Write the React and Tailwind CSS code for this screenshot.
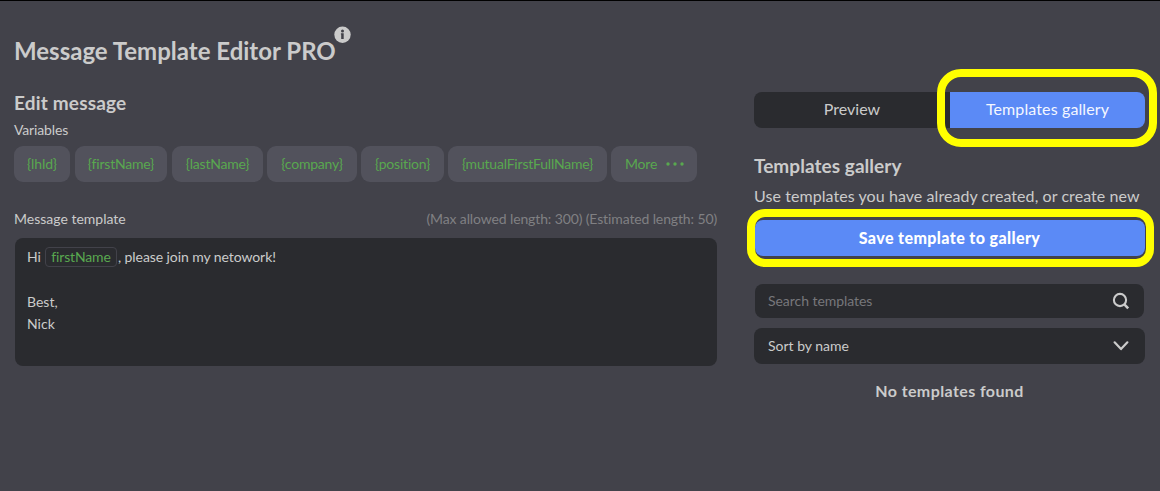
const variables = [
  { label: "{lhId}", box: "w-[56px] mr-[5px]" },
  { label: "{firstName}", box: "w-[92px] mr-[5px]" },
  { label: "{lastName}", box: "w-[91px] mr-1" },
  { label: "{company}", box: "w-[90px] mr-1" },
  { label: "{position}", box: "w-[83px] mr-1" },
  { label: "{mutualFirstFullName}", box: "w-[159px] mr-1" },
];

function InfoIcon() {
  return (
    <svg className="mt-[25px] -ml-[2px] size-[17px] shrink-0" viewBox="0 0 17 17">
      <circle cx="8.5" cy="8.8" r="8.2" fill="#cbcbcb" />
      <circle cx="8.5" cy="4.9" r="1.5" fill="#42424a" />
      <path d="M6.9 7.3h2.8v5.6H7.2V8.6h-.3z" fill="#42424a" />
    </svg>
  );
}

function EditorPanel() {
  return (
    <section className="w-[703px]">
      <h2 className="h-[26px] text-[19px] leading-[26px] font-bold tracking-[0.17px] whitespace-nowrap">Edit message</h2>
      <div className="mt-[4px] h-5 text-[14px] leading-5 tracking-[-0.15px]">Variables</div>
      <div className="mt-[6px] flex text-[14px] tracking-[-0.2px] text-[#59a84f]">
        {variables.map((v) => (
          <button key={v.label} className={`${v.box} h-9 shrink-0 rounded-[9px] bg-[#52525c] pb-[2px] whitespace-nowrap`}>
            {v.label}
          </button>
        ))}
        <button className="flex h-9 w-[86px] items-center rounded-[9px] bg-[#52525c] pb-[2px] pl-[14px]">
          More
          <svg className="mt-px ml-[9px] h-1 w-[18px]" viewBox="0 0 18 4" fill="#59a84f">
            <circle cx="2" cy="2" r="1.7" />
            <circle cx="9" cy="2" r="1.7" />
            <circle cx="16" cy="2" r="1.7" />
          </svg>
        </button>
      </div>
      <div className="mt-[27px] flex h-5 justify-between text-[14px] leading-5 whitespace-nowrap">
        <span>Message template</span>
        <span className="tracking-[-0.125px] text-[#808083]">(Max allowed length: 300) (Estimated length: 50)</span>
      </div>
      <div className="mt-[9px] ml-px h-32 w-[702px] rounded-lg bg-[#2a2b2f] pt-2 pl-3 text-[14px] leading-[22px]">
        <div className="flex h-[22px] items-center">
          <span className="w-[18px]">Hi</span>
          <span className="flex h-5 w-[72px] items-center justify-center rounded-[4px] border border-[#42424a] tracking-[-0.15px] text-[#59a84f]">
            firstName
          </span>
          <span className="ml-px tracking-[-0.08px]">, please join my netowork!</span>
        </div>
        <div className="mt-[23px]">Best,</div>
        <div>Nick</div>
      </div>
    </section>
  );
}

function GalleryPanel() {
  return (
    <section className="ml-[37px] w-[391px]">
      <div className="relative flex h-9 text-[16px]">
        <button className="w-[196px] rounded-l-lg bg-[#2a2b2f] pb-[2px]">Preview</button>
        <button className="w-[195px] rounded-r-lg bg-[#5b8af6] pb-[2px] tracking-[0.12px] text-[#f4f7ff]">Templates gallery</button>
        <div className="absolute -top-[23px] left-[183px] h-[78px] w-[220px] rounded-[24px] border-8 border-[#ffff00]" />
      </div>
      <h2 className="mt-[25px] h-[26px] text-[19px] leading-[26px] font-bold tracking-[0.05px]">Templates gallery</h2>
      <p className="mt-[5px] h-6 text-[16px] leading-6 tracking-[0.07px] whitespace-nowrap">
        Use templates you have already created, or create new
      </p>
      <div className="relative mt-[12px] h-9">
        <button className="ml-px h-9 w-[390px] rounded-lg bg-[#5b8af6] pr-px text-[16px] font-black tracking-[0.4px] text-white">
          Save template to gallery
        </button>
        <div className="absolute -top-[11px] -left-[7px] h-[58px] w-[407px] rounded-[18px] border-8 border-[#ffff00]" />
      </div>
      <div className="mt-[28px] ml-px flex h-[34px] w-[389px] items-center justify-between rounded-lg bg-[#2a2b2f] pr-[14px] pl-[13px] text-[14px] text-[#77777b]">
        <span className="pb-[2px] tracking-[-0.05px]">Search templates</span>
        <svg className="size-[18px]" viewBox="0 0 18 18" fill="none" stroke="#cbcbcb" strokeWidth="2.1">
          <circle cx="8" cy="8" r="6.1" />
          <path d="M12.3 12.3 16.2 16.3" strokeWidth="2.6" />
        </svg>
      </div>
      <div className="mt-[10px] flex h-9 items-center justify-between rounded-lg bg-[#2a2b2f] pr-4 pl-[14px] text-[14px]">
        <span className="pb-[2px]">Sort by name</span>
        <svg className="size-4" viewBox="0 0 16 16" fill="none" stroke="#cbcbcb" strokeWidth="2.2" strokeLinecap="round" strokeLinejoin="round">
          <path d="m1.6 4.3 6.4 6.8 6.4-6.8" />
        </svg>
      </div>
      <div className="mt-[15px] text-center text-[16px] leading-6 font-bold tracking-[0.4px]">No templates found</div>
    </section>
  );
}

export default function App() {
  return (
    <main className="h-[491px] w-[1160px] overflow-hidden border-t border-black bg-[#42424a] pl-[14px] font-['Lato',sans-serif] text-[#cbcbcb]">
      <header className="flex h-[89px] items-start">
        <h1 className="mt-[34px] text-[24px] leading-8 font-bold whitespace-nowrap">Message Template Editor PRO</h1>
        <InfoIcon />
      </header>
      <div className="flex">
        <EditorPanel />
        <div className="pt-[2px]">
          <GalleryPanel />
        </div>
      </div>
    </main>
  );
}
